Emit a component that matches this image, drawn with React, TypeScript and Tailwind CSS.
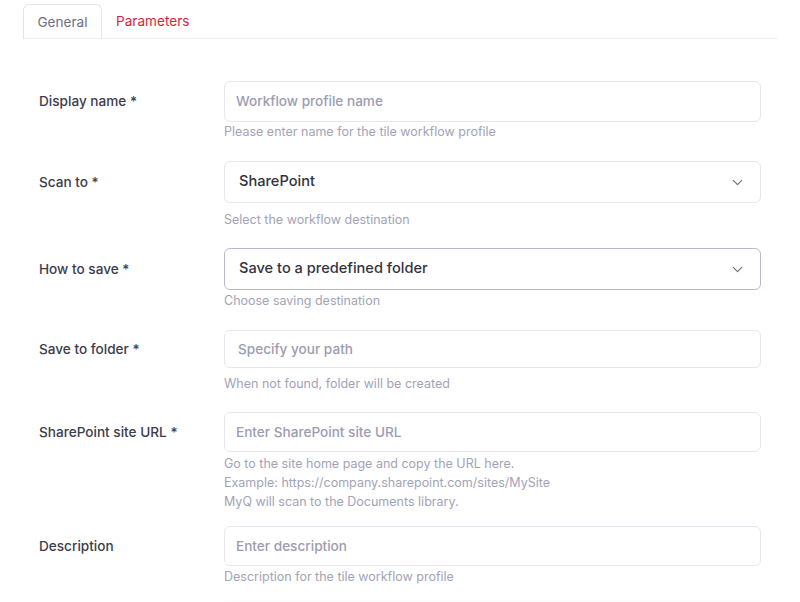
import { ChevronDown } from "lucide-react";

type Row = {
  label: string;
  kind: "input" | "select";
  value: string;
  help: string[];
  rowClass: string;
  boxClass: string;
  helpClass: string;
  padClass: string;
  active?: boolean;
};

const rows: Row[] = [
  {
    label: "Display name *",
    kind: "input",
    value: "Workflow profile name",
    help: ["Please enter name for the tile workflow profile"],
    rowClass: "mt-[42px]",
    boxClass: "h-[41px]",
    helpClass: "mt-0",
    padClass: "pl-[11px]",
  },
  {
    label: "Scan to *",
    kind: "select",
    value: "SharePoint",
    help: ["Select the workflow destination"],
    rowClass: "mt-[20px]",
    boxClass: "h-[42px]",
    helpClass: "mt-[7px]",
    padClass: "pl-[14px]",
  },
  {
    label: "How to save *",
    kind: "select",
    value: "Save to a predefined folder",
    help: ["Choose saving destination"],
    rowClass: "mt-[19px]",
    boxClass: "h-[42px]",
    helpClass: "mt-[1px]",
    padClass: "pl-[14px]",
    active: true,
  },
  {
    label: "Save to folder *",
    kind: "input",
    value: "Specify your path",
    help: ["When not found, folder will be created"],
    rowClass: "mt-[20px]",
    boxClass: "h-[38px]",
    helpClass: "mt-[6px]",
    padClass: "pl-[13px]",
  },
  {
    label: "SharePoint site URL *",
    kind: "input",
    value: "Enter SharePoint site URL",
    help: [
      "Go to the site home page and copy the URL here.",
      "Example: https://company.sharepoint.com/sites/MySite",
      "MyQ will scan to the Documents library.",
    ],
    rowClass: "mt-[19px]",
    boxClass: "h-[40px]",
    helpClass: "mt-[2px]",
    padClass: "pl-[11px]",
  },
  {
    label: "Description",
    kind: "input",
    value: "Enter description",
    help: ["Description for the tile workflow profile"],
    rowClass: "mt-[15px]",
    boxClass: "h-[40px]",
    helpClass: "mt-[1px]",
    padClass: "pl-[11px]",
  },
];

const FormRow = ({ row }: { row: Row }) => {
  const isSelect = row.kind === "select";
  return (
    <div className={`flex ${row.rowClass}`}>
      <div className={`w-[185px] shrink-0 flex items-center text-[13.6px] font-medium text-[#3c3c4c] ${row.boxClass}`}>
        {row.label}
      </div>
      <div className="flex-1">
        <div
          className={`flex items-center justify-between rounded-[6px] border bg-white pr-[14px] ${row.padClass} ${row.boxClass} ${
            row.active ? "border-[#b9b9c9]" : "border-[#e6e6ef]"
          }`}
        >
          <span
            className={
              isSelect
                ? "text-[14.6px] font-medium text-[#33333f]"
                : "text-[13.6px] font-medium text-[#9c9cb1]"
            }
          >
            {row.value}
          </span>
          {isSelect && <ChevronDown className="w-[17px] h-[17px] text-[#6e6e84]" strokeWidth={1.7} />}
        </div>
        <div className={`${row.helpClass} text-[12.5px] leading-[19px] text-[#a3a3b6]`}>
          {row.help.map((line) => (
            <div key={line}>{line}</div>
          ))}
        </div>
      </div>
    </div>
  );
};

const App = () => {
  return (
    <div className="w-[800px] h-[602px] overflow-hidden bg-white px-[23px] pt-[4px]" style={{ fontFamily: "Inter, 'Noto Sans', sans-serif" }}>
      <div className="flex border-b border-[#ececf3] h-[35px]">
        <div className="w-[79px] h-[35px] flex items-center justify-center rounded-t-[6px] border border-b-0 border-[#e3e3ec] text-[13.6px] text-[#6e6e82]">
          General
        </div>
        <div className="ml-[14px] h-[35px] flex items-center text-[13.6px] text-[#d81e41]">Parameters</div>
      </div>

      <div className="px-[16px]">
        {rows.map((row) => (
          <FormRow key={row.label} row={row} />
        ))}
        <div className="ml-[185px] mt-[12px] h-[14px] rounded-t-[6px] bg-gradient-to-b from-white to-[#f5f5f8]" />
      </div>
    </div>
  );
};

export default App;
